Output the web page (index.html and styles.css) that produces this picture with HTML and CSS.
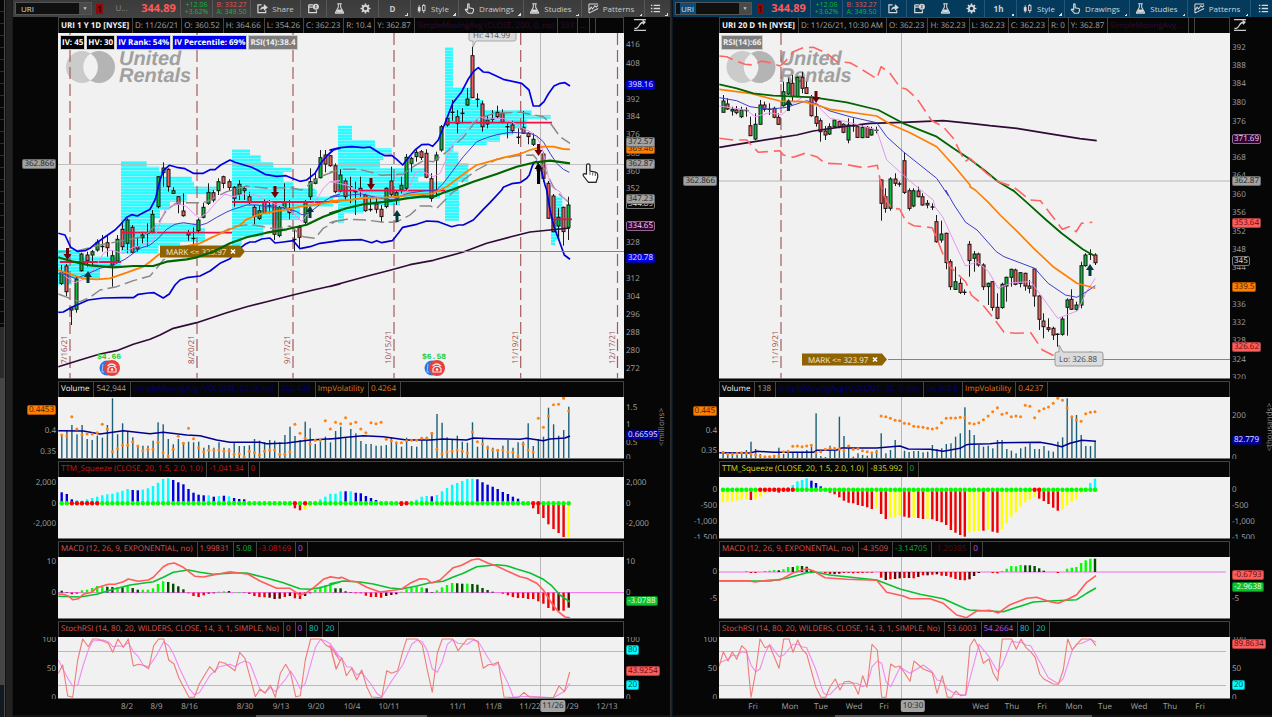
FILE: index.html
```html
<!DOCTYPE html>
<html lang="en">
<head>
<meta charset="utf-8">
<title>URI charts</title>
<link rel="stylesheet" href="styles.css">
</head>
<body>
<svg class="defs" aria-hidden="true">
  <defs>
    <symbol id="i-share" viewBox="0 0 12 12"><path d="M5 2H1v8.500h8.500V8" fill="none" stroke="currentColor" stroke-width="1.300"/><path d="M3.300 8.200C3.500 5 5.300 3.700 7.500 3.700V1.200L11.800 4.900 7.500 8.400V6.200C5.500 6.200 4.300 6.700 3.300 8.200z" fill="currentColor"/></symbol>
    <symbol id="i-cal" viewBox="0 0 12 12"><path d="M.8 2v8.400h8.400V8M.8 4.500h4.500M.8 2h4.700" fill="none" stroke="currentColor" stroke-width="1.300"/><circle cx="8.600" cy="4" r="3.300" fill="currentColor"/><path d="M9.500 2.700c-1.800-.6-2 .9-.9 1.200s.8 1.700-1 1.200M8.600 2v4" stroke="#444" stroke-width=".6" fill="none"/></symbol>
    <symbol id="i-flask" viewBox="0 0 12 12"><path d="M3.500.7h5M4.700.7v4L1.600 10.400q-.3.900.7.900h7.400q1 0 .7-.9L7.300 4.700v-4" fill="none" stroke="currentColor" stroke-width="1.100"/><path d="M3.800 7.200h4.500l1.700 3.300H2z" fill="currentColor"/></symbol>
    <symbol id="i-gear" viewBox="0 0 12 12"><circle cx="6" cy="6" r="2.900" fill="none" stroke="currentColor" stroke-width="1.900"/><path d="M6 .6v2M6 9.400v2M.6 6h2M9.400 6h2M2.200 2.200l1.400 1.400M8.400 8.400l1.400 1.400M9.800 2.200L8.400 3.600M3.600 8.400L2.200 9.800" stroke="currentColor" stroke-width="1.800"/></symbol>
    <symbol id="i-style" viewBox="0 0 12 12"><path d="M3.500 2.500v8M8.500 1v10" stroke="currentColor"/><rect x="2" y="4.500" width="3" height="4.500" fill="currentColor"/><rect x="7.200" y="2.800" width="2.600" height="5.500" fill="#333" stroke="currentColor"/></symbol>
    <symbol id="i-hand" viewBox="0 0 12 12"><path d="M4 7.500V1.700q0-.8.8-.8t.8.8v3.500l4 .8q1 .3.900 1.300l-.5 2.200-1 1.600H4.700L1.600 7.700q-.4-1 .6-1z" fill="none" stroke="currentColor" stroke-width="1.200"/></symbol>
    <symbol id="i-pattern" viewBox="0 0 12 12"><path d="M1 1h10M1 11L11 6M1 1v10M1.500 7.500l2-3 1.500 2 2.500-3.500 1.500 1.500L11 2.500" fill="none" stroke="currentColor" stroke-width="1.100"/></symbol>
    <symbol id="i-list" viewBox="0 0 12 12"><path d="M1 2.500h1.600M1 6h1.600M1 9.500h1.600M4 2.500h7M4 6h7M4 9.500h7" stroke="currentColor" stroke-width="1.400"/></symbol>
    <symbol id="i-scale" viewBox="0 0 12 12"><path d="M0 .7h12M0 11.300h12" stroke="currentColor" stroke-width="1.300"/><path d="M.5 9.500c3 0 3.500-1 5-3.500S8 3 10.500 3M8.500 1.300l2.500 1.700-2 2.200" fill="none" stroke="currentColor" stroke-width="1.300"/></symbol>
    <pattern id="rows" width="6" height="3" patternUnits="userSpaceOnUse"><rect width="6" height="3" fill="#7df5fa"/><rect width="6" height="2" fill="#2bfbff"/></pattern>
  </defs>
</svg>
<main class="desk">
  <aside class="rail"><div class="rail-rows"></div><div class="rail-grip"></div></aside>

  <section class="panel panel-a" aria-label="URI 1 Y 1D">
    <nav class="toolbar">
      <label class="combo"><input type="text" value="URI" aria-label="Symbol"><button type="button" aria-label="Symbols">▼</button></label>
      <button class="w-alert"><span class="alert">1</span></button>
      <span class="w-name dim">U...</span>
      <strong class="w-price price">344.89</strong>
      <span class="w-change stack sep up"><span>+12.06</span><span>+3.62%</span></span>
      <span class="w-quote stack sep"><span class="down">B: 332.27</span><span class="up">A: 349.50</span></span>
      <button class="w-share sep"><svg><use href="#i-share"/></svg>Share</button>
      <button class="w-icon sep" aria-label="Calendar"><svg><use href="#i-cal"/></svg></button>
      <button class="w-icon sep" aria-label="Study"><svg><use href="#i-flask"/></svg></button>
      <button class="w-icon" aria-label="Settings"><svg><use href="#i-gear"/></svg></button>
      <button class="w-frame sep more"><b>D</b></button>
      <button class="w-style sep more"><svg><use href="#i-style"/></svg>Style</button>
      <button class="w-draw sep more"><svg><use href="#i-hand"/></svg>Drawings</button>
      <button class="w-study sep more"><svg><use href="#i-flask"/></svg>Studies</button>
      <button class="w-pattern sep more"><svg><use href="#i-pattern"/></svg>Patterns</button>
      <button class="w-icon sep more" aria-label="List"><svg><use href="#i-list"/></svg></button>
    </nav>
    <div class="panes">
      <div class="pane pane-main">
        <header class="head"><b class="white">URI 1 Y 1D [NYSE]</b><span>D: 11/26/21</span><span>O: 360.52</span><span>H: 364.66</span><span>L: 354.26</span><span>C: 362.23</span><span>R: 10.4</span><span>Y: 362.87</span><span class="plum">SimpleMovingAvg (CLOSE, 200, 0, no)</span><span class="plum">333</span><span class="leaf">...</span><span></span></header>
        <button class="scale" aria-label="Scale"><svg><use href="#i-scale"/></svg></button>
        <div class="axis left" data-axis="a0l"></div>
        <div class="plot"><svg data-chart="a0"></svg>
          <div class="badges"><b class="black">IV: 45</b><b class="black">HV: 30</b><b class="blue">IV Rank: 54%</b><b class="blue">IV Percentile: 69%</b><b class="grey">RSI(14):38.4</b></div>
        </div>
        <div class="axis right" data-axis="a0r"></div>
      </div>
      <div class="pane">
        <header class="head"><span class="white">Volume</span><span>542,944</span><span class="navy">SimpleMovingAvg (VOLUME, 20, 0, no)</span><span class="navy">552,439</span><span class="orange">ImpVolatility</span><span class="orange">0.4264</span></header>
        <div class="axis left" data-axis="a1l"></div><div class="plot"><svg data-chart="a1"></svg></div><div class="axis right" data-axis="a1r"></div>
      </div>
      <div class="pane">
        <header class="head"><span class="red">TTM_Squeeze (CLOSE, 20, 1.5, 2.0, 1.0)</span><span class="red">-1,041.34</span><span class="red">0</span></header>
        <div class="axis left" data-axis="a2l"></div><div class="plot"><svg data-chart="a2"></svg></div><div class="axis right" data-axis="a2r"></div>
      </div>
      <div class="pane">
        <header class="head"><span class="coral">MACD (12, 26, 9, EXPONENTIAL, no)</span><span class="coral">1.99831</span><span class="green">5.08</span><span class="red">-3.08169</span><span class="violet">0</span></header>
        <div class="axis left" data-axis="a3l"></div><div class="plot"><svg data-chart="a3"></svg></div><div class="axis right" data-axis="a3r"></div>
      </div>
      <div class="pane">
        <header class="head"><span class="coral">StochRSI (14, 80, 20, WILDERS, CLOSE, 14, 3, 1, SIMPLE, No)</span><span class="coral">0</span><span class="violet">0</span><span class="cyan">80</span><span class="cyan">20</span></header>
        <div class="axis left" data-axis="a4l"></div><div class="plot"><svg data-chart="a4"></svg></div><div class="axis right" data-axis="a4r"></div>
      </div>
    </div>
    <footer class="dates" data-dates="a"></footer>
    <div class="scroller"><i></i></div>
  </section>

  <div class="divider"></div>

  <section class="panel panel-b" aria-label="URI 20 D 1h">
    <nav class="toolbar">
      <label class="combo"><input type="text" value="URI" aria-label="Symbol"><button type="button" aria-label="Symbols">▼</button></label>
      <button class="w-alert"><span class="alert">1</span></button>
      <strong class="w-price price">344.89</strong>
      <span class="w-change stack sep up"><span>+12.06</span><span>+3.62%</span></span>
      <span class="w-quote stack sep"><span class="down">B: 332.27</span><span class="up">A: 349.50</span></span>
      <button class="w-icon sep" aria-label="Share"><svg><use href="#i-share"/></svg></button>
      <button class="w-icon sep" aria-label="Calendar"><svg><use href="#i-cal"/></svg></button>
      <button class="w-icon" aria-label="Study"><svg><use href="#i-flask"/></svg></button>
      <button class="w-icon" aria-label="Settings"><svg><use href="#i-gear"/></svg></button>
      <button class="w-frame sep more"><b>1h</b></button>
      <button class="w-style sep more"><svg><use href="#i-style"/></svg>Style</button>
      <button class="w-draw sep more"><svg><use href="#i-hand"/></svg>Drawings</button>
      <button class="w-study sep more"><svg><use href="#i-flask"/></svg>Studies</button>
      <button class="w-pattern sep more"><svg><use href="#i-pattern"/></svg>Patterns</button>
      <button class="w-icon sep" aria-label="List"><svg><use href="#i-list"/></svg></button>
    </nav>
    <div class="panes">
      <div class="pane pane-main">
        <header class="head"><b class="white">URI 20 D 1h [NYSE]</b><span>D: 11/26/21, 10:30 AM</span><span>O: 362.23</span><span>H: 362.23</span><span>L: 362.23</span><span>C: 362.23</span><span>R: 0</span><span>Y: 362.87</span><span class="plum">SimpleMovingAvg ...</span><span></span></header>
        <button class="scale" aria-label="Scale"><svg><use href="#i-scale"/></svg></button>
        <div class="axis left" data-axis="b0l"></div>
        <div class="plot"><svg data-chart="b0"></svg><div class="badges"><b class="grey">RSI(14):66</b></div></div>
        <div class="axis right" data-axis="b0r"></div>
      </div>
      <div class="pane">
        <header class="head"><span class="white">Volume</span><span>138</span><span class="navy">SimpleMovingAvg (VOLUME, 20, 0, no)</span><span class="navy">56,368.8</span><span class="orange">ImpVolatility</span><span class="orange">0.4237</span></header>
        <div class="axis left" data-axis="b1l"></div><div class="plot"><svg data-chart="b1"></svg></div><div class="axis right" data-axis="b1r"></div>
      </div>
      <div class="pane">
        <header class="head"><span class="yellow">TTM_Squeeze (CLOSE, 20, 1.5, 2.0, 1.0)</span><span class="yellow">-835.992</span><span class="green">0</span></header>
        <div class="axis left" data-axis="b2l"></div><div class="plot"><svg data-chart="b2"></svg></div><div class="axis right" data-axis="b2r"></div>
      </div>
      <div class="pane">
        <header class="head"><span class="coral">MACD (12, 26, 9, EXPONENTIAL, no)</span><span class="coral">-4.3509</span><span class="green">-3.14705</span><span class="maroon">-1.20385</span><span class="violet">0</span></header>
        <div class="axis left" data-axis="b3l"></div><div class="plot"><svg data-chart="b3"></svg></div><div class="axis right" data-axis="b3r"></div>
      </div>
      <div class="pane">
        <header class="head"><span class="coral">StochRSI (14, 80, 20, WILDERS, CLOSE, 14, 3, 1, SIMPLE, No)</span><span class="coral">53.6003</span><span class="violet">54.2664</span><span class="cyan">80</span><span class="cyan">20</span></header>
        <div class="axis left" data-axis="b4l"></div><div class="plot"><svg data-chart="b4"></svg></div><div class="axis right" data-axis="b4r"></div>
      </div>
    </div>
    <footer class="dates" data-dates="b"></footer>
    <div class="scroller"><i></i></div>
  </section>
</main>
<script src="charts.js"></script>
</body>
</html>
```
FILE: styles.css
```css
* { box-sizing: border-box; }
body { margin: 0; background: #060606; color: #a2a2a2; font: 8px/11px "Open Sans", "Noto Sans", sans-serif; text-rendering: geometricPrecision; overflow: hidden; }
button, input { font: inherit; color: inherit; background: none; border: 0; padding: 0; margin: 0; }
.defs { position: absolute; width: 0; height: 0; }
.desk { display: grid; grid-template-columns: 13px 657fr 3px 599fr; height: 100vh; min-height: 480px; }

.rail { display: flex; background: #303030; border-right: 1px solid #191919; }
.rail-rows { width: 5px; border-right: 1px solid #4a4a4a; background: linear-gradient(#0000 0 327px, #2b2b2b 327px 378px, #454545 378px 685px, #101a20 685px), repeating-linear-gradient(#070707 0 11px, #2c2c2c 11px 12px); }
.rail-grip { flex: 1; background: #222; border-left: 1px solid #111; }
.divider { background: linear-gradient(90deg, #2a2a2a 0 1px, #0b2a40 1px 2px, #0c1620 2px); }

.panel { display: flex; flex-direction: column; min-width: 0; background: #060606; }
.toolbar { display: flex; height: 17px; flex: none; align-items: stretch; background: linear-gradient(#3b3b3b, #424242); color: #c8c8c8; overflow: hidden; }
.panel-b .toolbar { background: #043a5b; color: #c9d6de; }
.toolbar > * { display: flex; align-items: center; justify-content: center; gap: 4px; flex: none; }
.toolbar svg { width: 11px; height: 11px; flex: none; color: #d8d8d8; }
.sep { border-left: 1px solid #585858; }
.panel-b .sep { border-color: #23567a; }
.more { padding-right: 4px; background: linear-gradient(135deg, #0000 50%, #ddd 50%) right 2px bottom 1px / 3px 3px no-repeat; }
.toolbar .combo { width: 77px; height: 13px; margin: 2px 1px 2px 2px; gap: 0; background: #101010; border: 1px solid #555; }
.combo input { flex: 1; min-width: 0; padding-left: 5px; color: #ddd; outline: 0; }
.panel-b .combo input { background: linear-gradient(#0b4c7a, #0b4c7a) 4px 0 / 16px 11px no-repeat; }
.combo button { width: 12px; height: 11px; background: #4a4a4a; font-size: 5px; line-height: 11px; color: #ccc; }
.alert { width: 7px; height: 10px; background: #8e0a0a; color: #300; font-weight: 700; line-height: 10px; text-align: center; }
.w-alert { width: 13px; }
.panel-b .w-alert { width: 14px; }
.w-name { width: 31px; }
.dim { color: #888; }
.w-price { width: 43px; }
.price { font-size: 11px; color: #ff5a5a; }
.w-change { width: 32px; }
.w-quote { width: 38px; }
.toolbar .stack { flex-direction: column; gap: 0; font-size: 7px; line-height: 7px; }
.up { color: #12b53c; }
.down { color: #e8504f; }
.w-share { width: 50px; }
.w-icon { width: 26px; }
.w-frame { width: 32px; }
.w-style { width: 48px; }
.w-draw { width: 65px; }
.w-study { width: 58px; }
.w-pattern { width: 63px; }

.panes { display: flex; flex-direction: column; flex: 1; gap: 2px; min-height: 0; }
.pane { display: grid; grid-template: 16px 1fr / 45px 1fr 46px; flex: 78 1 0; min-height: 0; }
.pane-main { flex-grow: 362; }
.panel-b .pane { grid-template-columns: 46px 1fr 42px; }
.head { grid-column: 2; display: flex; min-width: 0; overflow: hidden; border: 1px solid #444; border-width: 1px 1px 0; background: #060606; white-space: nowrap; }
.head > * { flex: none; padding: 1px 4px 0 2px; border-right: 1px solid #444; }
.pane-main .head > * { padding-right: 3px; padding-top: 2px; }
.scale { grid-column: 3; justify-self: start; margin: 2px 0 0 10px; width: 12px; height: 12px; color: #ccc; }
.panel-b .scale { margin-left: 4px; }
.scale svg { display: block; width: 12px; height: 12px; }
.plot { grid-column: 2; grid-row: 2; position: relative; min-height: 0; background: #f1f1f1; overflow: hidden; }
.plot > svg { position: absolute; inset: 0; width: 100%; height: 100%; }
.axis { grid-row: 2; position: relative; overflow: hidden; min-height: 0; }
.axis.left { grid-column: 1; }
.axis.right { grid-column: 3; }
.axis span, .dates span { position: absolute; white-space: nowrap; }
.axis span { height: 10px; line-height: 10px; margin-top: -5px; padding: 0 2px; }
.axis.left span { right: 0; }
.axis.right span { left: 0; }
.axis .tag { border-radius: 2px; line-height: 8px; padding: 0 1px; border: 1px solid #0005; }
.axis.left .tag { right: 2px; }
.axis.right .tag { left: 2px; }
.axis .unit { writing-mode: vertical-rl; transform: rotate(180deg); height: auto; margin: 0; padding: 0; color: #8c8c8c; }
.axis.right .unit { left: auto; right: 3px; }
.panel-b .axis.right .unit { right: -3px; }
.t-blue { background: #0000e6; color: #e4e4ff; }
.t-navy { background: #000096; color: #e4e4ff; }
.t-grey { background: #a3a3a3; color: #222; }
.t-orange { background: #ff7f00; color: #472200; }
.t-black { background: #0a0a0a; color: #ddd; }
.axis .t-black { border-color: #777; }
.t-plum { background: #330033; color: #f0d8f0; }
.axis .t-plum { border-color: #8b6a8b; }
.t-red { background: #ff5c5c; color: #561010; }
.t-green { background: #0ac22d; color: #e9ffe9; }
.t-cyan { background: #00ffff; color: #045; }

.badges { position: absolute; left: 2px; top: 2px; display: flex; gap: 1px; color: #fff; }
.badges b { height: 15px; padding: 0 1px; border: 1px solid #ccc; line-height: 13px; font-size: 8px; }
.badges .black { background: #000; }
.badges .blue { background: #0000f0; }
.badges .grey { background: #7c7c7c; color: #eee; }

.white { color: #f2f2f2; }
.plum { color: #300c35; }
.leaf { color: #0a4a0a; }
.navy { color: #000080; }
.orange { color: #e07818; }
.red { color: #c41818; }
.coral { color: #d9534f; }
.green { color: #0fae35; }
.violet { color: #d050e0; }
.cyan { color: #15c5c5; }
.yellow { color: #d8d820; }
.maroon { color: #5c0c0c; }

.dates { position: relative; height: 16px; flex: none; }
.dates span { top: 2px; transform: translateX(-50%); }
.dates .now { background: #a3a3a3; color: #222; border-radius: 2px; padding: 0 2px; top: 1px; height: 12px; }
.scroller { height: 2px; flex: none; display: flex; background: #141414; }
.scroller i { width: 26%; margin-left: 37%; background: #555; }
.panel-b .scroller i { width: 43%; margin-left: 27%; }

.plot text { font-family: "Open Sans", "Noto Sans", sans-serif; font-size: 8px; }
.plot .brand { font: italic 700 20px "Liberation Sans", Arial, sans-serif; fill: #a0a0a0; }
.plot .money { font: 700 8px "Liberation Mono", monospace; fill: #22c83c; }
```
FILE: charts.js
```js
// Tiles: x offset, y offset, x units per pixel. Vertical units are thirds of a pixel.
const TILE = {
  a: [0, 0, 3], b: [330, 0, 3], c: [0, 190, 3], d: [330, 190, 3], e: [0, 380, 3], f: [330, 380, 3],
  g: [670, 0, 3], h: [970, 0, 3], i: [670, 190, 2.605], j: [670, 380, 3], k: [970, 380, 3]
};
const r1 = n => Math.round(n * 10) / 10;

function line(color, width, parts, dash) {
  const pts = [];
  for (const [tile, list] of parts) {
    const [ox, oy, s] = TILE[tile];
    for (const p of list.split(' ')) {
      const [x, y] = p.split(',').map(Number);
      pts.push(r1(ox + x / s) + ',' + r1(oy + y / 3));
    }
  }
  return `<polyline points="${pts.join(' ')}" fill="none" stroke="${color}" stroke-width="${width}" stroke-linejoin="round"${dash ? ` stroke-dasharray="${dash}"` : ''}/>`;
}
const seg = (x1, y1, x2, y2, c, w = 1, dash = 'none') =>
  `<line x1="${x1}" y1="${y1}" x2="${x2}" y2="${y2}" stroke="${c}" stroke-width="${w}" stroke-dasharray="${dash}"/>`;
const rect = (x, y, w, h, c, extra = '') => `<rect x="${r1(x)}" y="${r1(y)}" width="${r1(w)}" height="${r1(h)}" fill="${c}" ${extra}/>`;

const XA = i => 61.7 + 5.07 * i;
const XB = i => 723 + 4.65 * i;

function candles(X, start, base, text, w) {
  return text.trim().split(/\s*;\s*/).map((row, n) => {
    const [h, t, b, l, c] = row.split(' ');
    const x = Math.floor(X(start + n)) + .5, y = v => base + v / 3;
    let s = seg(x, r1(y(+h)), x, r1(y(+l)), '#1c1c1c');
    if (c) s += rect(x - w / 2, y(+t), w, Math.max(1.5, (b - t) / 3), c === 'g' ? '#0dbb3a' : '#f0605f', 'stroke="#151515" stroke-width="1"');
    else s += seg(x - 2, r1(y((+t + +b) / 2)), x + 2, r1(y((+t + +b) / 2)), '#111', 1.4);
    return s;
  }).join('');
}
const COLORS = { c: '#0ff', b: '#0000dc', r: '#f00000', y: '#ffff00', G: '#00ff00', D: '#004b00', R: '#f00000', M: '#660000' };
function bars(X, start, baseY, text) {
  return text.split(' ').map((v, n) => {
    if (v === '-') return '';
    const y = 380 + v.slice(1) / 3;
    return rect(X(start + n) - 1.2, Math.min(y, baseY), 2.4, Math.abs(y - baseY), COLORS[v[0]]);
  }).join('');
}
function volume(X, text) {
  return text.split(' ').map((v, n) => rect(X(n) - .6, 380 + v / 3, 1.4, (235 - v) / 3, '#1c5f78')).join('');
}
function dots(X, text) {
  return text.split(' ').map((v, n) => `<circle cx="${r1(X(n))}" cy="${r1(380 + v / 3)}" r="1.5" fill="#ff8210"/>`).join('');
}
function squeeze(X, count, y, red) {
  let s = '';
  for (let i = 0; i < count; i++) s += `<circle cx="${r1(X(i))}" cy="${y}" r="2.2" fill="${red.includes(i) ? '#f00' : '#0f0'}"/>`;
  return s;
}
// Each row: top bottom right-edge, in tile units
function profile(tile, left, text) {
  const [ox, oy] = TILE[tile];
  return text.split(';').map(row => {
    const [t, b, x] = row.split(' ').map(Number);
    return rect(left, oy + t / 3, ox + x / 3 - left, (b - t) / 3 + .1, 'url(#rows)');
  }).join('');
}
const down = (x, y) => `<path d="M${x - 1.5} ${y}h3v6h2.500l-4 6-4-6h2.500z" fill="#6e0008"/>`;
const up = (x, y, c = '#00393c') => `<path d="M${x} ${y}l4 6h-2.500v6h-3v-6h-2.500z" fill="${c}"/>`;
const expiry = (x, label) => seg(x, 33, x, 379, '#a35c5c', 1.2, '12 5') + `<text transform="translate(${x - 3} 364) rotate(-90)" fill="#a04848">${label}</text>`;
const brand = x => `<circle cx="${x + 16}" cy="67" r="16" fill="#cbcbcb"/><circle cx="${x + 33}" cy="67" r="16" fill="#b4b4b4"/><path d="M${x + 24.5} 53.500a16 16 0 0 1 0 27a16 16 0 0 1 0-27z" fill="#f1f1f1"/><text class="brand" x="${x + 53}" y="65">United</text><text class="brand" x="${x + 53}" y="82">Rentals</text>`;
const mark = (x, y) => `<path d="M${x} ${y - 6}h80l5 6-5 6h-80z" fill="#8f6400"/><text x="${x + 6}" y="${y + 3}" fill="#f2ead8">MARK &lt;= 323.97</text><path d="M${x + 71} ${y - 2}l4 4m0-4l-4 4" stroke="#fff" stroke-width="1.500"/>`;
const event = (x, t) => `<text class="money" x="${x - 12}" y="359">${t}</text>`
  + `<circle cx="${x - 2}" cy="368" r="7.500" fill="#2878e6"/><circle cx="${x + 3}" cy="368" r="8" fill="#e8403c"/><path d="M${x - 1.5} 366q4-4 8.500 0M${x - 1} 372v-3.500l2-2h4l2 2v3.500z" fill="none" stroke="#f1e4e4" stroke-width="1.200"/><circle cx="${x + 3}" cy="369.500" r="1.200" fill="#fff"/><path d="M${x - 6} 364l-1 8h2" fill="none" stroke="#9ec4ff"/>`;

const charts = {};
charts.a0 = [58, 33, 566, 346, brand(66)
  + profile('c', 58, '180 200 240;200 230 362;230 265 300;265 285 215')
  + profile('a', 121, '483 500 440;500 515 478;515 530 490;530 545 575;545 560 582;560 570 650')
  + profile('c', 121, '0 12 640;12 35 560;35 60 510;60 85 480;85 100 460;100 115 600;115 155 615;155 165 540;165 190 475')
  + profile('a', 232, '448 465 750;465 487 782;487 503 820;503 515 875;515 545 850;545 565 880;565 570 945')
  + profile('c', 232, '0 20 950;20 50 1000;50 90 900;90 105 830;105 140 790;140 170 725')
  + profile('b', 338, '377 420 66;420 445 135;445 462 185;462 480 160;480 505 150;505 530 290;530 545 265;545 570 345')
  + profile('d', 338, '0 25 330;25 45 210;45 70 100;70 98 42')
  + profile('b', 445, '142 263 369;263 300 425;300 330 460;330 345 605;345 356 662;356 385 590;385 405 550;405 425 510;425 435 470;435 455 370;455 490 385;490 545 415;545 570 385')
  + profile('d', 445, '0 92 387')
  + profile('d', 551, '20 110 697;110 150 690;150 165 675')
  + expiry(70, '7/16/21') + expiry(197, '8/20/21') + expiry(293, '9/17/21') + expiry(394, '10/15/21') + expiry(520.7, '11/19/21') + expiry(617.5, '12/17/21')
  + seg(58, 164.5, 624, 164.5, '#b5b5b5', .8) + seg(540.5, 33, 540.5, 379, '#a9a9a9', .8)
  + candles(XA, 0, 0, `795 818 850 855 g;792 798 875 888 r;920 923 930 975 g;832 837 928 938 g;758 762 812 815 g;755 765 782 800 r;750 755 765 795 g;718 727 750 755 g;705 738 741 755;708 728 743 770 r;750 767 795 860 g;705 718 783 785 g;665 688 740 750 r;655 660 730 760 g;675 682 757 760 r;710 740 747 755 r;695 705 713 730 g;670 697 702 740;630 643 697 700 g;528 530 620 625 g;487 504 518 560 g;505 508 560 575 r;562 572 580 582 g;588 590 612 640 r;580 633 647 650 r;690 698 705 722 r;682 714 717 732;655 660 692 700 g;608 622 652 655 g;550 577 610 615 g;570 578 600 607 r;535 545 572 585 g;527 530 550 565 r;538 545 562 572 r;558 562 595 620 r;540 553 583 600 g;560 566 572 600 r;575 590 608 612 r;615 622 650 672 r;615 632 655 660 g;598 605 638 640 r;600 615 620 640;603 606 703 720 r;618 622 707 712 g;550 605 622 630 g;600 625 638 658 r;690 717 720 755;675 682 712 745 r;600 607 667 675 g;505 545 590 600 g;515 537 550 553 g;450 473 533 535 g;450 465 492 517 r;465 467 497 500 r;490 497 575 580 r;507 525 573 577 g;535 543 590 600 r;530 558 562 610;545 573 577 645;530 565 572 590 r;580 585 632 635 r;590 627 630 635;590 612 628 640 r;615 628 650 667 r;562 565 620 625 g;500 543 583 590 r;570 578 595 615 g;530 556 570 580 g;462 472 565 570 g;470 475 490 515 g;450 457 470 485 g;450 455 472 480 r;448 460 532 535 r;520 536 595 605 r;455 465 480 590 g;375 380 450 455 g;350 355 375 380 g;300 336 338 362;330 350 370 400 r;325 339 341 370;265 297 315 318 g;140 167 293 293 r;280 297 299 322;303 312 380 395 r;345 360 372 385 g;330 357 359 368;317 337 350 355 r;328 340 367 370 r;370 379 381 415;362 375 392 400 r;385 411 413 432;333 382 400 402 r;397 400 410 433 r;400 418 433 438 g;487 497 512 550 g;455 462 535 545 r;543 550 655 657 r;582 588 695 697 r;625 652 678 720 g;620 622 695 737 r;590 615 682 720 g`, 3)
  + seg(60, 262, 121, 262, '#f01048', 1.8) + seg(121, 232.7, 232, 232.7, '#f01048', 1.8) + seg(232, 202, 338, 202, '#f01048', 1.8) + seg(338, 190.7, 445, 190.7, '#f01048', 1.8) + seg(445, 122.7, 552, 122.7, '#f01048', 1.8) + seg(552, 219.3, 572, 219.3, '#f01048', 1.8)
  + line('#888', 1.4, [['c', '175,185 230,183 300,165 430,140 475,100 500,60 530,38 600,38'], ['a', '620,605 680,575 740,558 800,565 870,563 905,570 925,555 960,530 1010,512'], ['b', '0,517 35,508 90,508 155,526 220,522 250,500 280,482 310,485 350,455 400,412 440,360 490,340 570,337 640,350 665,375 690,410 720,430']], '13 5')
  + line('#888', 1.4, [['c', '175,312 210,325 240,335 270,322 300,300 350,290 400,272 450,258 470,235 490,210 560,175 620,150 700,110 750,103 830,118 870,108 910,140 945,145 970,115 1010,92'], ['d', '0,98 50,88 110,90 160,97 200,96 240,75 270,48 300,48 320,55 340,35 370,5'], ['b', '380,570 400,540 440,510 500,478 560,467 610,465 640,500 670,560'], ['d', '690,15 715,35']], '13 5')
  + line('#e596f2', 1, [['c', '175,240 200,262 225,278 250,268 285,235 310,190 330,180 350,185 370,190 400,172 430,165 460,150 480,100 495,60 515,48 540,42 560,50 580,70 597,84 620,70 650,35 675,12 700,20 730,12 750,10 790,25 820,40 850,50 880,70 905,95 920,75 935,50 950,25'], ['a', '955,590 970,565 990,545 1020,542'], ['b', '0,545 50,555 90,575 130,590 200,595 235,570 255,520 270,512 290,520 310,530 330,520 350,475 370,430 385,415 400,400 430,365 450,350 470,357 520,355 545,365 570,380 600,395 620,410 635,440 645,480 655,530 665,560'], ['d', '690,5 700,25 715,32']])
  + line('#3d3dd0', 1, [['c', '175,250 200,255 225,265 255,255 300,235 340,225 375,208 400,190 420,175 450,165 475,145 500,118 525,103 550,98 575,102 600,106 620,100 650,82 680,66 700,58 740,45 770,45 800,50 830,52 860,55 890,65 905,74 925,70 945,55 970,35 1000,17 1020,13'], ['d', '0,22 50,16 95,12 150,25 190,30 220,15'], ['b', '235,580 285,572 320,570 340,550 370,510 400,470 440,425 470,413 500,404 540,397 600,400 620,408 640,425 660,460 680,490 700,508 718,517']])
  + line('#ff8000', 1.8, [['c', '175,240 210,252 250,266 290,268 330,265 380,248 430,230 450,215 475,195 500,180 540,172 600,160 640,140 680,122 720,105 740,88 780,72 820,65 860,58 900,50 940,45 980,38 1020,34'], ['d', '0,33 60,30 100,24 160,23 200,20 250,14'], ['b', '310,580 350,560 370,545 410,515 440,495 470,487 520,473 570,462 600,450 640,440 670,440 700,447 720,448']])
  + line('#0000e8', 1.7, [['c', '175,130 195,135 212,172 232,184 255,182 270,175 290,158 320,137 345,120 362,103 380,82 395,74 412,78 430,68 450,58 465,30'], ['a', '468,590 480,540 490,512 508,496 530,502 555,506 580,520 610,520 630,509 645,509 662,495 690,480 705,487 730,494 755,502 772,510 795,523 830,529 858,527 880,536 900,544 920,540 945,520 962,490 980,468 1000,450 1020,445'], ['b', '0,450 30,443 65,440 100,443 120,441 150,460 165,467 185,466 200,478 218,495 230,480 255,450 275,434 295,433 308,439 325,420 345,370 368,310 395,275 415,237 430,215 445,203 460,216 475,217 520,238 575,250 597,270 610,318 628,318 642,305 655,282 672,258 690,250 705,248 720,258']])
  + line('#0000d0', 1.7, [['c', '175,367 190,366 215,352 265,330 310,324 370,323 400,323 415,313 445,309 462,308 490,324 508,312 525,285 540,270 560,263 600,258 630,243 660,220 690,206 720,175 735,163 750,156 765,156 785,147 810,144 825,159 850,156 880,152 900,176 930,170 960,160 1020,152'], ['d', '0,156 30,151 95,149 125,158 140,152 155,158 187,152 205,130 218,112 260,103 290,93 325,95 365,110 385,105 400,105 430,90 460,58 480,38 515,0'], ['b', '520,562 545,551 570,548 590,535 598,525 606,500 612,488 620,484 632,505 645,555'], ['d', '650,0 660,60 672,110 685,145 703,195 720,208']])
  + line('#2f0b35', 1.7, [['c', '175,530 240,510 300,492 350,482 400,463 450,448 480,435 520,415 590,398 680,368 740,350 800,335 870,317 940,300 1020,282'], ['d', '0,289 50,275 110,259 180,241 240,224 310,211 400,186 470,160 540,141 600,126 660,120 720,114']])
  + seg(245, 251.5, 624, 251.5, '#a08440', 1) + mark(160, 251.5)
  + line('#006400', 2.2, [['c', '175,202 220,215 270,226 340,232 400,228 460,228 500,215 560,208 590,202 640,185 690,160 740,142 800,128 860,118 920,104 970,80 1020,62'], ['d', '0,70 50,55 100,43 170,35 230,25 280,19 310,20 340,8'], ['b', '370,568 430,545 500,522 560,500 610,488 660,482 720,490']])
  + down(67.5, 248) + down(275, 186) + down(371, 178) + down(538.5, 144)
  + up(88, 271) + up(310, 206) + up(397, 210) + up(538.5, 163, '#050505') + rect(537, 173, 3, 11, '#050505')
  + '<path d="M471 30h43q2 0 2 2v7q0 2-2 2h-38l-3 6v-6h-2q-2 0-2-2v-7q0-2 2-2z" fill="#dcdcdc" stroke="#999" stroke-width=".8"/><text x="473" y="38" fill="#555">Hi: 414.99</text>'
  + event(109, '$4.66') + event(434, '$6.58')
  + '<path d="M586.500 174v-8.500q0-1.700 1.700-1.700t1.700 1.700v5.500l5.500 1.200q2.300.6 2.300 2.600v2.700l-1.700 5h-7.500l-5-6.500q-1-2 .8-2.300z" fill="#fff" stroke="#222" stroke-width="1.200"/><path d="M590 175v-3M592.700 175.500v-3M595.300 176v-3M588 182h8.500" stroke="#333" stroke-width=".8"/>'];

charts.a1 = [58, 397, 566, 62, volume(XA, '167 150 135 163 135 177 180 167 173 135 55 163 130 153 172 197 197 197 182 127 133 177 193 177 187 185 187 185 203 195 203 187 203 205 187 198 198 196 177 182 187 180 182 187 165 140 168 180 125 145 192 185 170 187 153 140 173 147 160 183 192 192 197 197 195 173 192 200 173 198 200 172 170 157 102 128 172 180 167 185 188 127 200 173 197 203 207 197 180 203 187 185 130 198 177 170 83 133 167 150 80')
  + seg(540.5, 397, 540.5, 459, '#a9a9a9', .8)
  + line('#000090', 1.5, [['e', '175,152 250,153 300,162 370,152 450,161 490,157 560,165 600,167 650,180 690,187 780,187 800,191 860,189 930,180 1020,175'], ['f', '0,177 50,172 100,167 160,170 230,180 300,180 340,177 410,180 430,174 490,176 570,178 590,175 640,182 660,177 705,174 720,168']])
  + dots(XA, '165 167 110 147 165 162 162 158 133 147 215 206 196 196 185 198 212 208 208 187 218 228 208 169 190 145 176 203 215 211 210 210 214 212 223 221 230 214 218 225 214 210 210 223 223 216 133 160 175 192 181 181 122 147 127 131 113 131 127 147 158 128 131 127 178 182 188 188 182 181 181 175 175 160 208 221 216 214 210 214 219 156 185 192 203 210 211 210 215 217 228 193 210 216 115 142 108 74 73 55 93')];

charts.a2 = [58, 477, 566, 62, bars(XA, 0, 503.3, 'b337 b342 b358 c361 c362 c358 c354 c350 c346 c343 c341 c337 c332 c327 b330 b331 c329 c325 c318 c308 c297 c295 b300 b307 b313 b327 b338 b344 b346 c346 b350 c348 b347 c349 b354 b357 b358')
  + bars(XA, 46, 503.3, 'r385 r391 y389 y380 - c358 c350 c341 c341 c334 b334 c334 b338 b340 b348 b354 b360') + bars(XA, 67, 503.3, 'r378 - c366 c359 c350 c348 b349 c345 c334 c324 c314 c309 c303 c297 c296 b298 b307 b314 b320 b327 b336 b342 b350 b356 b366 - r385 r402 r414 r433 r447 r459 r471 y471')
  + seg(540.5, 477, 540.5, 539, '#a9a9a9', .8) + squeeze(XA, 101, 503.3, [2, 3, 4, 5, 6, 7, 46, 48, 67, 68, 93, 94])];

charts.a3 = [58, 557, 566, 62, seg(58, 592.6, 624, 592.6, '#f070f0')
  + bars(XA, 0, 592.6, 'D632 D636 R643 R641 G631 G629 G624 G618 G620 D620 D621 G622 D622 G616 D624 D629 G629 G629 G625 G612 G604 D606 D611 D619 D628 R640 R648 R651 R646 M641 M640 G635 G634 D633 G637 G636 D637 R642 R648 R651 R652 M653 M657 M656 R651 M648 R655 R657 M648 M640 G630 G620 G616 G614 D625 D625')
  + bars(XA, 56, 592.6, 'D634 D636 R640 R640 R647 R651 R651 R653 M648 M645 M643 G635 G628 G622 G620 G622 D625 D636 G631 G622 G615 G609 D610 D611 G611 D612 D614 D624 D630 D635 - R641 R646 R651 R654 R654 R657 R657 R664 R671 R684 R692 M692 R692 M683')
  + seg(540.5, 557, 540.5, 619, '#a9a9a9', .8)
  + line('#0ac030', 1.6, [['e', '175,649 240,651 290,643 340,628 390,615 460,605 490,592 520,577 565,570 600,577 640,583 700,579 740,579 800,594 850,608 900,626 930,628 960,623 1020,606'], ['f', '0,611 40,603 90,606 130,612 180,624 215,627 260,618 300,608 340,604 370,591 400,580 440,560 500,554 530,557 560,567 600,579 640,598 665,617 690,645 720,666']])
  + line('#ff5c5c', 1.6, [['e', '175,642 190,643 205,648 218,659 235,656 250,643 275,637 290,623 325,613 345,613 370,605 385,597 415,604 445,600 460,592 490,560 505,552 523,549 550,562 585,589 610,591 640,585 690,575 745,583 780,603 830,625 870,625 900,645 920,638 945,620 970,598 990,591 1020,595'], ['f', '0,590 25,594 35,592 60,603 80,605 110,622 150,636 180,632 215,627 240,610 270,596 290,597 305,609 330,600 370,563 395,556 425,540 445,536 475,550 500,558 540,577 570,590 590,595 620,610 640,630 665,670 685,695 705,711 720,713']])];

charts.a4 = [58, 637, 566, 62, seg(58, 651.5, 624, 651.5, '#1ff') + seg(58, 685.5, 624, 685.5, '#1ff') + seg(540.5, 637, 540.5, 699, '#a9a9a9', .8)
  + line('#f08af5', 1.1, [['e', '175,840 203,895 218,918 233,915 250,855 265,810 278,783 310,780 325,785 338,800 354,797 370,800 385,787 400,815 415,830 430,856 446,860 470,825 491,785 506,797 522,825 537,862 567,925 583,944 598,938 629,887 658,860 690,853 705,860 719,850 735,843 750,850 780,928 795,940 811,922 826,935 857,897 872,873 887,898 901,926 916,910 947,800 962,778 977,783 992,792 1009,825 1020,832'], ['f', '0,790 18,820 35,835 50,860 65,862 80,885 95,877 125,915 140,940 155,951 187,900 218,855 245,793 262,780 277,785 292,812 307,867 322,877 337,845 352,793 368,779 384,790 412,793 430,780 444,783 475,835 490,857 505,850 535,912 550,951 600,949 670,953 705,933 719,910']])
  + line('#ee7c78', 1.1, [['e', '175,880 188,855 203,948 218,952 233,840 248,777 265,800 278,777 293,777 325,790 338,817 354,777 370,802 385,777 400,858 415,853 430,856 446,866 461,797 476,777 491,777 506,840 522,852 537,895 567,952 583,952 598,912 629,860 645,877 658,845 675,850 705,872 719,817 735,835 766,950 780,928 795,938 811,915 826,952 841,880 857,853 872,880 887,950 901,947 916,840 932,777 962,777 977,795 992,803 1009,867 1020,843'], ['f', '0,797 18,867 35,833 49,887 65,865 80,900 95,870 110,920 125,951 155,953 170,872 185,880 203,872 218,815 230,777 262,777 277,795 292,870 307,937 322,820 337,777 368,777 384,812 412,777 430,777 444,787 460,865 475,854 490,853 505,846 522,951 565,953 582,937 598,951 670,953 687,918 703,935 719,876']])];

charts.b0 = [719, 33, 511, 346, brand(726.5) + expiry(781, '11/19/21')
  + seg(719, 181, 1230, 181, '#b5b5b5') + seg(901.5, 33, 901.5, 379, '#b5b5b5')
  + candles(XB, 0, 0, '285 303 337 337 g;295 312 327 330 r;320 328 333 347 g;318 330 338 343 r;320 330 350 354 g;322 328 335 350;350 377 407 408 r;340 373 417 420 g;300 315 373 373 g;305 315 328 335 r;310 327 329 345;320 325 352 355 r;340 352 373 374 r;245 275 317 320 g;235 248 282 285 g;225 250 290 305 r;230 232 290 292 g;215 232 265 280 r;245 263 280 282 r;285 290 347 350 r;320 350 370 380 r;355 362 395 425 r;378 393 405 420 r;370 380 402 405 g;357 360 380 382 g;360 365 380 385 r;370 373 397 400 r;355 375 420 430 g;355 377 379 395;375 380 412 414 r;375 382 413 415 g;378 382 412 413 r;380 388 405 407 g;380 390 392 400', 3)
  + candles(XB, 34, 190, '-32 -30 40 92 r;-5 20 55 68 r;-38 -33 55 62 g;-50 -33 -20 -12 r;-25 -19 -17 -10;-113 -88 7 12 r;-5 2 55 62 r;-5 2 48 52 g;-10 3 20 22 r;10 20 45 47 r;30 40 45 55 r;40 50 52 60;75 95 155 158 r;92 132 150 158 g;128 130 218 238 r;208 215 290 300 r;230 275 298 300 g;265 280 307 312 r;298 306 308 315;153 163 212 260 r;183 192 205 245 g;188 192 225 230 r;220 225 290 300 r;278 280 290 345 g;273 275 352 362 r;310 352 385 388 r;278 283 353 356 g;260 262 288 335 g;236 238 262 290 g;236 240 283 286 r;246 248 280 292 g;248 250 288 302 r;270 288 295 310 r;235 237 318 350 r;316 318 388 420 r;370 393 410 445 r;385 413 418 425 r;410 415 435 450 r;430 432 434 470;380 387 433 437 g;325 330 352 437 g;298 328 358 360 r;335 345 358 362 g;215 227 345 355 g;190 195 227 230 g;178 192 194 210;190 195 218 225 r', 3)
  + line('#2f0b35', 1.7, [['g', '148,442 220,430 380,405 430,393 520,380 600,370 700,367 820,362 900,370'], ['h', '0,370 60,377 140,385 250,403 330,416 380,422']])
  + line('#e596f2', 1, [['g', '148,318 230,330 255,350 300,338 335,345 370,310 400,290 430,290 450,325 480,355 530,365 620,390 650,480 700,525 740,560 790,600'], ['i', '690,50 710,80 740,155 770,228 800,215 830,245 855,295 890,278 940,275 975,330 1010,385 1040,372 1062,362 1085,305 1108,265']])
  + line('#3d3dd0', 1, [['g', '148,293 200,302 240,320 300,328 350,322 410,302 440,312 480,333 540,350 620,368 650,410 700,455 800,535 835,587'], ['i', '718,0 740,45 770,97 800,120 850,185 870,200 950,235 985,280 1030,315 1060,322 1085,305 1108,287']])
  + line('#ff8000', 1.7, [['g', '148,268 240,280 330,303 400,305 440,315 480,328 620,348 660,372 720,398 800,440 850,495 900,555'], ['h', '0,560'], ['i', '795,0 830,38 860,75 905,125 950,178 1000,232 1060,280 1108,295']])
  + line('#006400', 1.8, [['g', '148,253 200,265 250,280 310,287 380,290 430,292 530,307 625,330 700,370 800,410 850,445 900,478'], ['h', '45,512 85,545 130,572'], ['i', '893,0 930,38 980,90 1020,130 1075,178 1105,197']])
  + line('#ff6464', 1.6, [['g', '148,168 170,170 195,182 225,193 250,195 275,183 300,188 330,198 345,185 370,155 400,143 430,142 470,160 500,185 540,188 570,205 620,236 633,200 660,220 690,262 710,268 740,295 785,362 820,380 850,415 885,485 900,475'], ['h', '50,520 85,545 130,560'], ['i', '938,30 965,32 985,62 1022,118 1040,110 1058,125 1072,100 1100,97']], '14 6')
  + line('#ff6464', 1.6, [['g', '148,415 190,420 230,420 265,457 330,452 340,465 370,472 405,460 440,470 465,490 520,492 580,503 622,496 635,565'], ['i', '565,35 578,55 598,57 615,95 635,107 683,113 695,145 710,190 730,230 770,275 785,315 815,345 850,395 870,427 900,430 940,428 970,480 1000,497 1100,487']], '14 6')
  + down(816, 91) + up(788.5, 99) + up(1090, 264)
  + seg(888, 359.5, 1230, 359.5, '#a08440') + mark(802, 359.5)
  + '<path d="M1057 352h2v-7l4 7h38q2 0 2 2v10q0 2-2 2h-44q-2 0-2-2v-10q0-2 2-2z" fill="#dcdcdc" stroke="#888" stroke-width=".8"/><text x="1059" y="362" fill="#444">Lo: 326.88</text>'];

charts.b1 = [719, 397, 511, 62, volume(XB, '215 222 225 225 220 210 185 207 222 228 228 225 203 222 215 218 217 215 210 200 100 228 231 197 210 110 168 200 230 220 225 227 220 210 160 220 210 180 235 212 216 213 213 217 215 195 207 205 192 190 170 160 82 150 165 195 200 197 205 180 180 207 212 220 205 200 190 207 207 198 212 215 185 172 55 112 105 165 198 198 185')
  + seg(901.5, 397, 901.5, 459, '#b5b5b5')
  + line('#000090', 1.5, [['j', '148,218 240,219 260,214 310,217 430,217 440,211 500,210 515,204 620,204 690,198 715,207 780,208 820,214 870,205 890,194 900,193'], ['k', '0,193 60,191 90,188 210,187 245,193 275,200 300,190 335,181 378,184']])
  + dots(XB, '217 222 222 220 218 220 221 225 228 230 230 228 228 215 214 199 198 200 198 196 218 215 208 205 205 207 210 198 208 206 212 215 218 216 108 110 115 121 122 130 131 139 140 142 145 147 144 128 115 114 114 112 113 130 132 128 119 108 95 83 103 99 110 108 110 76 79 113 93 86 81 70 55 61 84 110 120 124 101 97 95')];

charts.b2 = [719, 477, 511, 62, bars(XB, 0, 489.7, 'y367 y365 y364 y362 y360 y357 r360 y358 y350 y340 - - r338 - c322 c315 c304 c300 c295 b302 b309 b319 - r338 r343 r352 r362 r368 r370 r375 r378 r382 r387 y385 r402 r417 y414 y412 y407 r410 r413 y414 r414 r417 y416 r418 r423 r427 r435 r450 r458 r465 r470 y457 y453 y453 r452 y450 r455 r458 y447 y430 y410 y397 y380 y367 y358 y350 r356 r363 r372 r383 r392 y388 y375 y365 y357 y338 - c309 c296')
  + seg(901.5, 477, 901.5, 539, '#b5b5b5') + squeeze(XB, 81, 489.7, [8, 9, 10, 11, 12, 13, 14, 15, 67, 68])];

charts.b3 = [719, 557, 511, 62, seg(719, 572, 1226, 572, '#f070f0')
  + bars(XB, 5, 572, 'G573 R579 R579 - G573 G572 G570 D571 G568 G561 D561 G557 D558 D560 D570 - - R580 R582 M582 M581 R579 M578 R580 R579 R579 R578 R578 - R593 M600 R598 M597 M595 R594 M594 R595 M591 R586 M586 R584 M583 R587 R588 R592 R597 R600 R601 M598 M588 M579 - - R579 R580 G573 G566 G558 G559 G555 D556 D556 D558 D565 D572 - - R579 - G566 G563 G561 G549 G541 G536 D536')
  + seg(901.5, 557, 901.5, 619, '#b5b5b5')
  + line('#0ac030', 1.6, [['j', '148,603 300,603 350,595 410,578 435,576 480,585 620,600 690,627 750,643 820,656 890,688'], ['k', '0,690 100,695 190,666 240,663 320,659 350,640 378,624']])
  + line('#ff5c5c', 1.6, [['j', '148,602 235,602 255,606 300,600 330,600 370,578 410,566 430,572 465,593 530,598 620,601 650,637 700,648 720,656 780,656 820,670 860,705 890,713'], ['k', '0,706 20,693 60,691 85,699 120,674 170,655 200,652 240,665 265,670 295,657 320,644 350,607 378,587']])];

charts.b4 = [719, 637, 511, 62, seg(719, 651.5, 1226, 651.5, '#1ff') + seg(719, 685.5, 1226, 685.5, '#1ff') + seg(901.5, 637, 901.5, 699, '#b5b5b5')
  + line('#f08af5', 1.1, [['j', '148,848 174,838 187,825 200,828 215,815 230,818 243,855 257,875 270,867 285,820 299,793 327,830 341,825 369,793 383,793 396,800 410,803 437,868 460,938 470,945 480,943 510,912 537,910 560,910 578,920 591,915 606,860 622,843 635,850 648,905 662,920 690,862 720,880 760,855 787,875 801,900 817,903 832,927 857,943 887,945'], ['k', '0,895 27,793 57,830 83,875 97,855 125,783 139,787 153,787 168,795 182,797 209,845 235,893 265,911 280,895 307,810 320,793 335,790 362,778 378,787']])
  + line('#ee7c78', 1.1, [['j', '148,858 160,815 174,843 187,815 200,838 215,797 230,812 243,952 257,875 270,777 285,803 299,797 327,865 341,777 357,777 369,817 383,780 396,808 410,822 437,920 453,952 467,952 480,920 496,897 510,930 523,905 537,904 550,910 565,943 578,887 591,922 606,793 622,810 635,952 648,952 662,852 676,862 690,858 720,904 732,843 760,867 787,878 801,940 817,887 832,952 845,952 857,933 872,947 887,945'], ['k', '0,797 13,777 27,805 40,850 57,837 70,880 83,902 97,777 125,777 139,808 153,777 168,803 182,815 196,833 209,882 221,897 250,912 265,913 280,870 293,777 307,810 320,793 335,777 362,777 378,797']])];

for (const el of document.querySelectorAll('[data-chart]')) {
  const [x, y, w, h, body] = charts[el.dataset.chart];
  el.setAttribute('viewBox', `${x} ${y} ${w} ${h}`);
  el.setAttribute('preserveAspectRatio', 'none');
  el.innerHTML = body + seg(x, y + h - .5, x + w, y + h - .5, '#777');
}

// Axis labels: "text@y" or "text@y@style"
const axes = {
  a0l: '362.866@164@grey',
  a0r: '416@45.5 408@63.5 392@99.5 384@117.5 376@135.5 368@154 360@171.5 352@189 344@207 328@243 320@261 312@279 304@297 296@315 288@333 280@351 272@369 398.16@85@blue 369.46@149@orange 372.57@142@grey 362.87@164@grey 344.89@204@black 347.23@199@grey 334.65@226.5@plum 320.78@258@blue',
  a1l: '0.4@431 0.35@452 0.4453@410@orange', a1r: '1.5@408 1@425 0.5@442.5 0@458 0.66595@435@navy <millions>@408@unit',
  a2l: '2,000@483 0@504 -2,000@524.5', a2r: '2,000@483 0@504 -2,000@524.5',
  a3l: '10@562.5 0@593', a3r: '10@562.5 0@593 -3.0788@601@green',
  a4l: '100@640 50@669 0@698', a4r: '100@640 0@698 80@650.5@cyan 43.9254@671@red 20@685@cyan',
  b0l: '362.866@181@grey',
  b0r: '396@31 392@48 388@66 384@84.5 380@103 376@121.5 368@158 364@176 360@195 356@213 352@231.5 348@250 344@268.5 336@305 332@323 328@341 324@360 320@378 371.69@139.5@plum 362.87@181@grey 353.64@223@red 345@261.5@black 339.5@287@orange 326.62@346.5@red',
  b1l: '0.4@431 0.35@451.5 0.445@411@orange', b1r: '200@415.5 0@458 82.779@440@navy <thousands>@403@unit',
  b2l: '0@490 -500@506 -1,000@522 -1,500@538', b2r: '0@490 -500@506 -1,000@522 -1,500@538',
  b3l: '0@572 -5@599', b3r: '-5@599 -0.6793@575@red -2.9638@587@green',
  b4l: '100@640 50@669 0@698', b4r: '100@638 50@669 0@698 89.8634@644@red 20@685@cyan'
};
for (const el of document.querySelectorAll('[data-axis]')) {
  const key = el.dataset.axis, [, y0, , h] = charts[key.slice(0, 2)];
  for (const item of axes[key].split(' ')) {
    const [text, y, style] = item.split('@');
    const s = document.createElement('span');
    s.textContent = text;
    s.style.top = ((y - y0) / h * 100).toFixed(2) + '%';
    if (style) s.className = style === 'unit' ? 'unit' : 'tag t-' + style;
    el.append(s);
  }
}

const dates = {
  a: [13, 657, '8/2@127 8/9@156.5 8/16@189.5 8/30@245 9/13@281 9/20@316 10/4@352 10/11@389 11/1@458 11/8@493.5 11/22@530 11/29@568 12/13@607 11/26@553@now'],
  b: [673, 599, 'Fri@753 Mon@790 Tue@821 Wed@854 Fri@884 Wed@980.5 Thu@1012 Fri@1042 Mon@1074 Tue@1105 Wed@1139 Thu@1170 Fri@1200 10:30@913@now']
};
for (const el of document.querySelectorAll('[data-dates]')) {
  const [x0, w, list] = dates[el.dataset.dates];
  for (const item of list.split(' ')) {
    const [text, x, cls] = item.split('@');
    const s = document.createElement('span');
    s.textContent = text;
    s.style.left = ((x - x0) / w * 100).toFixed(2) + '%';
    if (cls) s.className = cls;
    el.append(s);
  }
}
```
